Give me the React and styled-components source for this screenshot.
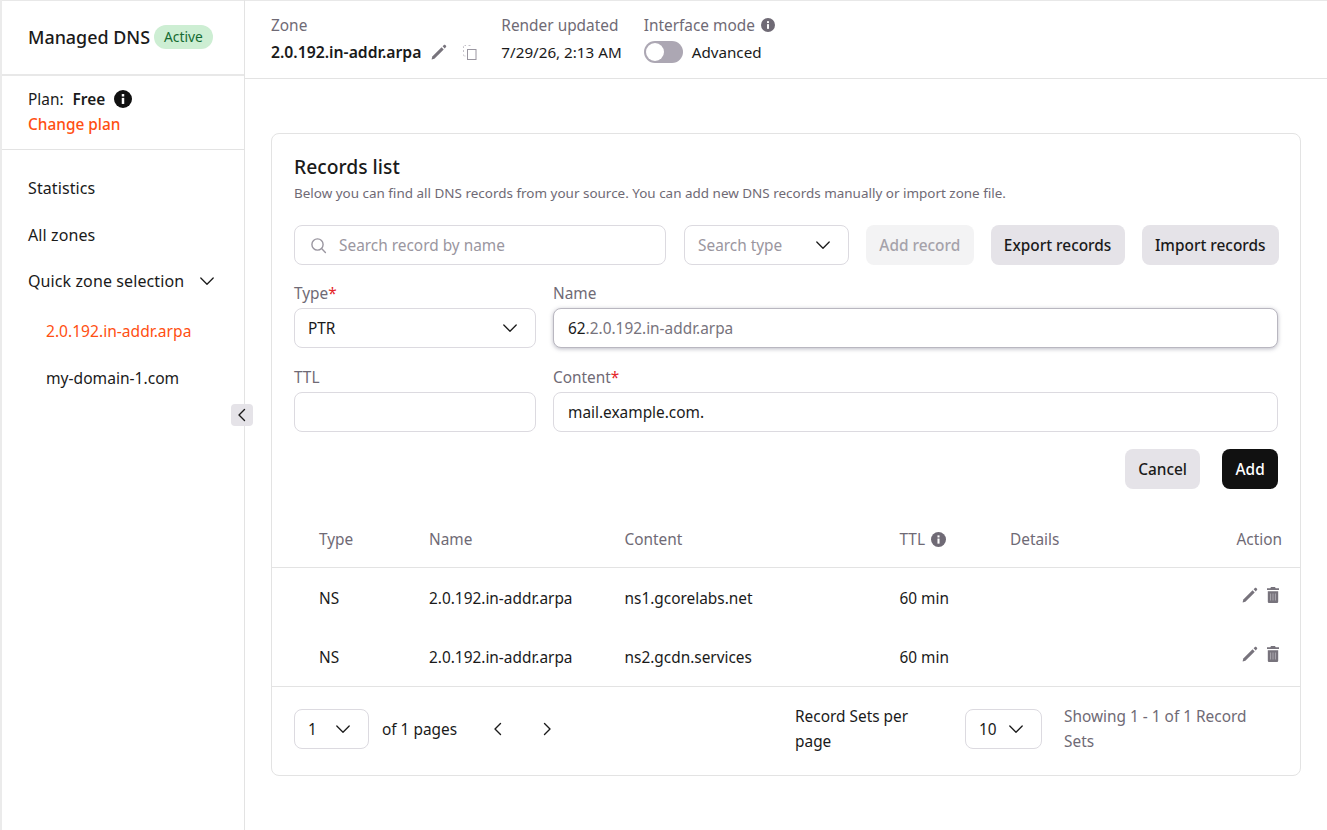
import styled, { createGlobalStyle } from "styled-components";

const GlobalStyle = createGlobalStyle`
  html, body { margin: 0; padding: 0; background: #fff; }
  body { font-family: "Noto Sans", "Open Sans", sans-serif; color: #1a1a1a; font-size: 15.4px; }
  * { box-sizing: border-box; }
`;

const Chevron = ({ size = 16, color = "#1a1a1a" }) => (
  <svg width={size} height={size} viewBox="0 0 16 16" fill="none" stroke={color} strokeWidth="1.3" strokeLinecap="round" strokeLinejoin="round">
    <path d="M1.8 5 8 11.2 14.2 5" />
  </svg>
);

const Arrow = ({ flip }) => (
  <svg width="16" height="16" viewBox="0 0 16 16" fill="none" stroke="#1a1a1a" strokeWidth="1.4" strokeLinecap="round" strokeLinejoin="round">
    <path d={flip ? "M5.5 2.5 11 8l-5.5 5.5" : "M10.5 2.5 5 8l5.5 5.5"} />
  </svg>
);

const Info = ({ size = 14, color = "#6f6a75" }) => (
  <svg width={size} height={size} viewBox="0 0 16 16">
    <circle cx="8" cy="8" r="8" fill={color} />
    <rect x="6.9" y="7" width="2.2" height="5.4" fill="#fff" />
    <rect x="6.9" y="3.6" width="2.2" height="2.2" fill="#fff" />
  </svg>
);

const Pencil = ({ color = "#77737c" }) => (
  <svg width="16" height="16" viewBox="0 0 16 16" fill={color}>
    <path d="M.6 15.4 1.3 12.6 10.6 3.3l2.1 2.1-9.3 9.3-2.8.7z" />
    <path d="M11.6 2.3 12.9 1c.4-.4 1-.4 1.4 0l.7.7c.4.4.4 1 0 1.4l-1.3 1.3-2.1-2.1z" />
  </svg>
);

const Trash = () => (
  <svg width="12" height="16" viewBox="0 0 12 16">
    <path fill="#77737c" d="M4 0h4l.7 1.3H12v1.8H0V1.3h3.3L4 0zM.8 4.2h10.4v10.2c0 .9-.7 1.6-1.6 1.6H2.4c-.9 0-1.6-.7-1.6-1.6V4.2z" />
    <path stroke="#b9b6bd" strokeWidth="0.8" d="M3.6 6.5v7M6 6.5v7M8.4 6.5v7" />
  </svg>
);

const Copy = () => (
  <svg width="16" height="16" viewBox="0 0 16 16" fill="none">
    <rect x="5.5" y="5.5" width="8.5" height="10" stroke="#9a96a0" strokeWidth="1" />
    <path d="M1.5 4V2.5a1 1 0 0 1 1-1H4M6.5 1.5H9M1.5 6v2.5M1.5 10.5v.5a1 1 0 0 0 1 1H4" stroke="#c4c1c8" strokeWidth="1" strokeDasharray="2 1" />
  </svg>
);

const Search = () => (
  <svg width="17" height="17" viewBox="0 0 17 17" fill="none" stroke="#9a96a0" strokeWidth="1.4" strokeLinecap="round">
    <circle cx="7.5" cy="7.5" r="5.6" />
    <path d="M11.8 11.8l3.6 3.6" />
  </svg>
);

const Layout = styled.div`
  display: flex;
  min-height: 830px;
  border-top: 1px solid #e8e8e8;
`;
const Sidebar = styled.aside`
  position: relative;
  width: 245px;
  flex: none;
  margin-top: -1px;
  border-left: 2px solid #ebebeb;
  border-right: 1px solid #e3e3e3;
`;
const Brand = styled.div`
  height: 76px;
  padding: 22px 0 0 26px;
  display: flex;
  align-items: flex-start;
  gap: 4px;
  border-bottom: 2px solid #e8e8e8;
`;
const BrandName = styled.div`
  font-size: 17.9px;
  font-weight: 500;
  line-height: 30px;
`;
const Badge = styled.span`
  margin-top: 3px;
  height: 24px;
  padding: 0 10px;
  border-radius: 12px;
  background: #cdeed3;
  color: #146b32;
  font-size: 13.8px;
  line-height: 23px;
`;
const PlanBox = styled.div`
  height: 74px;
  padding: 11px 0 0 26px;
  border-bottom: 1px solid #e3e3e3;
`;
const PlanRow = styled.div`
  display: flex;
  align-items: center;
  height: 24px;
`;
const PlanName = styled.b`
  font-weight: 600;
  margin: 0 9px 0 9px;
`;
const ChangePlan = styled.div`
  color: #ff4f12;
  line-height: 28px;
  font-weight: 500;
`;
const Nav = styled.nav`
  padding: 14.75px 0 0 26px;
`;
const NavItem = styled.div`
  display: flex;
  align-items: center;
  height: 46.5px;
  font-size: 16px;
  letter-spacing: 0.1px;
  svg { margin-left: 15px; }
`;
const SubList = styled.div`
  margin-top: 3px;
  padding-left: 18px;
`;
const SubItem = styled.div`
  display: flex;
  align-items: center;
  height: 47px;
  font-size: 15.6px;
  color: ${(p) => (p.$active ? "#ff4f12" : "#1a1a1a")};
`;
const Collapse = styled.button`
  position: absolute;
  left: 229px;
  top: 404px;
  width: 22px;
  height: 22px;
  padding: 0;
  border: 0;
  border-radius: 4px;
  background: #e5e3e8;
  display: flex;
  align-items: center;
  justify-content: center;
`;
const Main = styled.main`
  flex: 1;
  min-width: 0;
`;
const TopBar = styled.header`
  height: 78px;
  display: flex;
  padding: 13px 0 0 26px;
  border-bottom: 1px solid #e3e3e3;
`;
const TopCol = styled.div`
  margin-right: ${(p) => p.$gap}px;
`;
const TopLabel = styled.div`
  display: flex;
  align-items: center;
  gap: 6px;
  height: 22px;
  color: #6f6a75;
`;
const TopValue = styled.div`
  display: flex;
  align-items: center;
  height: 30px;
  margin-top: 1px;
  font-size: ${(p) => (p.$bold ? "15.75px" : "15.2px")};
  font-weight: ${(p) => (p.$bold ? 600 : 400)};
  white-space: nowrap;
  svg:first-of-type { margin-left: 10px; }
  svg + svg { margin-left: 15px; }
`;
const Toggle = styled.span`
  display: block;
  position: relative;
  width: 39px;
  height: 22px;
  border-radius: 11px;
  background: #aca7b3;
  margin-right: 9px;
  &::after {
    content: "";
    position: absolute;
    left: 2px;
    top: 2px;
    width: 18px;
    height: 18px;
    border-radius: 50%;
    background: #fff;
  }
`;
const Card = styled.section`
  margin: 54px 26px 0;
  height: 643px;
  border: 1px solid #e3e3e3;
  border-radius: 8px;
`;
const CardHead = styled.div`
  padding: 19px 22px 0;
`;
const Title = styled.h2`
  margin: 0;
  font-size: 19.3px;
  font-weight: 500;
  line-height: 27px;
`;
const Sub = styled.p`
  margin: 4px 0 0;
  font-size: 13.46px;
  line-height: 18px;
  color: #6f6a75;
`;
const Toolbar = styled.div`
  display: flex;
  gap: 17px;
  margin-top: 23px;
`;
const Field = styled.div`
  display: flex;
  align-items: center;
  justify-content: space-between;
  height: 40px;
  width: ${(p) => (p.$w ? `${p.$w}px` : "100%")};
  flex: none;
  padding: 0 17px 0 ${(p) => (p.$inset ? 14 : 13)}px;
  background: #fff;
  border: 1px solid #dcdae0;
  border-radius: 8px;
  color: ${(p) => (p.$muted ? "#9a96a0" : "#1a1a1a")};
  ${(p) => p.$focus && "border-color: #b9b7c0; box-shadow: 0 1px 4px rgba(60, 60, 90, 0.35);"}
`;
const SearchBox = styled(Field)`
  justify-content: flex-start;
  gap: 12px;
  padding-left: 15px;
  margin-right: 1px;
`;
const Btn = styled.button`
  height: 40px;
  padding: 0 13.3px;
  border: 0;
  border-radius: 8px;
  font-family: inherit;
  font-size: 15.4px;
  font-weight: 500;
  white-space: nowrap;
  background: ${(p) => (p.$dark ? "#111" : p.$off ? "#f3f3f4" : "#e5e3e8")};
  color: ${(p) => (p.$dark ? "#fff" : p.$off ? "#a5a2aa" : "#1a1a1a")};
`;
const FormGrid = styled.div`
  display: grid;
  grid-template-columns: 242px 1fr;
  column-gap: 17px;
  row-gap: 18px;
  margin-top: 17px;
`;
const Label = styled.div`
  height: 26px;
  line-height: 24px;
  color: #6f6a75;
  em { color: #e5262a; font-style: normal; }
`;
const Ghost = styled.span`
  color: #77737c;
`;
const FormActions = styled.div`
  display: flex;
  justify-content: flex-end;
  gap: 22px;
  margin-top: 17px;
`;
const RowGrid = styled.div`
  display: grid;
  grid-template-columns: 110px 195.5px 275px 110.5px 1fr;
  align-items: center;
  padding: ${(p) => (p.$head ? "0" : "2px")} 18px 0 47px;
  height: ${(p) => p.$h}px;
  color: ${(p) => (p.$head ? "#6f6a75" : "#1a1a1a")};
  ${(p) => p.$head && "margin-top: 22px; border-bottom: 1px solid #e3e3e3;"}
`;
const Ttl = styled.div`
  display: flex;
  align-items: center;
  gap: 6px;
`;
const Rows = styled.div`
  border-bottom: 1px solid #e3e3e3;
`;
const Actions = styled.div`
  grid-column: 6;
  display: flex;
  align-items: center;
  gap: 9px;
  margin: -8px 3px 0 0;
`;
const HeadAction = styled.div`
  grid-column: 6;
`;
const Pager = styled.div`
  display: flex;
  align-items: center;
  padding: 17px 22px 0;
`;
const PagerText = styled.span`
  margin: 0 ${(p) => p.$right || 0}px 0 13px;
`;
const PageBtn = styled.span`
  display: flex;
  margin-right: ${(p) => p.$gap}px;
`;
const PerPage = styled.div`
  width: 135px;
  margin: 0 35px 0 0;
  line-height: 25px;
`;
const Showing = styled.div`
  width: 200px;
  margin-left: 22px;
  line-height: 25px;
  color: #6f6a75;
`;

export default function App() {
  return (
    <>
      <GlobalStyle />
      <Layout>
        <Sidebar>
          <Brand>
            <BrandName>Managed DNS</BrandName>
            <Badge>Active</Badge>
          </Brand>
          <PlanBox>
            <PlanRow>
              Plan: <PlanName>Free</PlanName>
              <Info size={18} color="#111" />
            </PlanRow>
            <ChangePlan>Change plan</ChangePlan>
          </PlanBox>
          <Nav>
            <NavItem>Statistics</NavItem>
            <NavItem>All zones</NavItem>
            <NavItem>Quick zone selection <Chevron /></NavItem>
            <SubList>
              <SubItem $active>2.0.192.in-addr.arpa</SubItem>
              <SubItem>my-domain-1.com</SubItem>
            </SubList>
          </Nav>
          <Collapse><Arrow /></Collapse>
        </Sidebar>
        <Main>
          <TopBar>
            <TopCol $gap={23}>
              <TopLabel>Zone</TopLabel>
              <TopValue $bold>2.0.192.in-addr.arpa <Pencil /><Copy /></TopValue>
            </TopCol>
            <TopCol $gap={22}>
              <TopLabel>Render updated</TopLabel>
              <TopValue>7/29/26, 2:13 AM</TopValue>
            </TopCol>
            <TopCol>
              <TopLabel>Interface mode <Info /></TopLabel>
              <TopValue><Toggle />Advanced</TopValue>
            </TopCol>
          </TopBar>
          <Card>
            <CardHead>
              <Title>Records list</Title>
              <Sub>Below you can find all DNS records from your source. You can add new DNS records manually or import zone file.</Sub>
              <Toolbar>
                <SearchBox $w={372} $muted><Search />Search record by name</SearchBox>
                <Field $w={165} $muted>Search type <Chevron /></Field>
                <Btn $off>Add record</Btn>
                <Btn>Export records</Btn>
                <Btn>Import records</Btn>
              </Toolbar>
              <FormGrid>
                <div>
                  <Label>Type<em>*</em></Label>
                  <Field>PTR <Chevron /></Field>
                </div>
                <div>
                  <Label>Name</Label>
                  <Field $focus $inset><span>62<Ghost>.2.0.192.in-addr.arpa</Ghost></span></Field>
                </div>
                <div>
                  <Label>TTL</Label>
                  <Field />
                </div>
                <div>
                  <Label>Content<em>*</em></Label>
                  <Field $inset>mail.example.com.</Field>
                </div>
              </FormGrid>
              <FormActions>
                <Btn>Cancel</Btn>
                <Btn $dark>Add</Btn>
              </FormActions>
            </CardHead>
            <RowGrid $head $h={57}>
              <div>Type</div>
              <div>Name</div>
              <div>Content</div>
              <Ttl>TTL <Info size={15} /></Ttl>
              <div>Details</div>
              <HeadAction>Action</HeadAction>
            </RowGrid>
            <Rows>
              <RowGrid $h={59}>
                <div>NS</div>
                <div>2.0.192.in-addr.arpa</div>
                <div>ns1.gcorelabs.net</div>
                <div>60 min</div>
                <Actions><Pencil /><Trash /></Actions>
              </RowGrid>
              <RowGrid $h={59}>
                <div>NS</div>
                <div>2.0.192.in-addr.arpa</div>
                <div>ns2.gcdn.services</div>
                <div>60 min</div>
                <Actions><Pencil /><Trash /></Actions>
              </RowGrid>
            </Rows>
            <Pager>
              <Field $w={75}>1 <Chevron /></Field>
              <PagerText $right={33}>of 1 pages</PagerText>
              <PageBtn $gap={33}><Arrow /></PageBtn>
              <PageBtn $gap={240}><Arrow flip /></PageBtn>
              <PerPage>Record Sets per page</PerPage>
              <Field $w={77}>10 <Chevron /></Field>
              <Showing>Showing 1 - 1 of 1 Record Sets</Showing>
            </Pager>
          </Card>
        </Main>
      </Layout>
    </>
  );
}
